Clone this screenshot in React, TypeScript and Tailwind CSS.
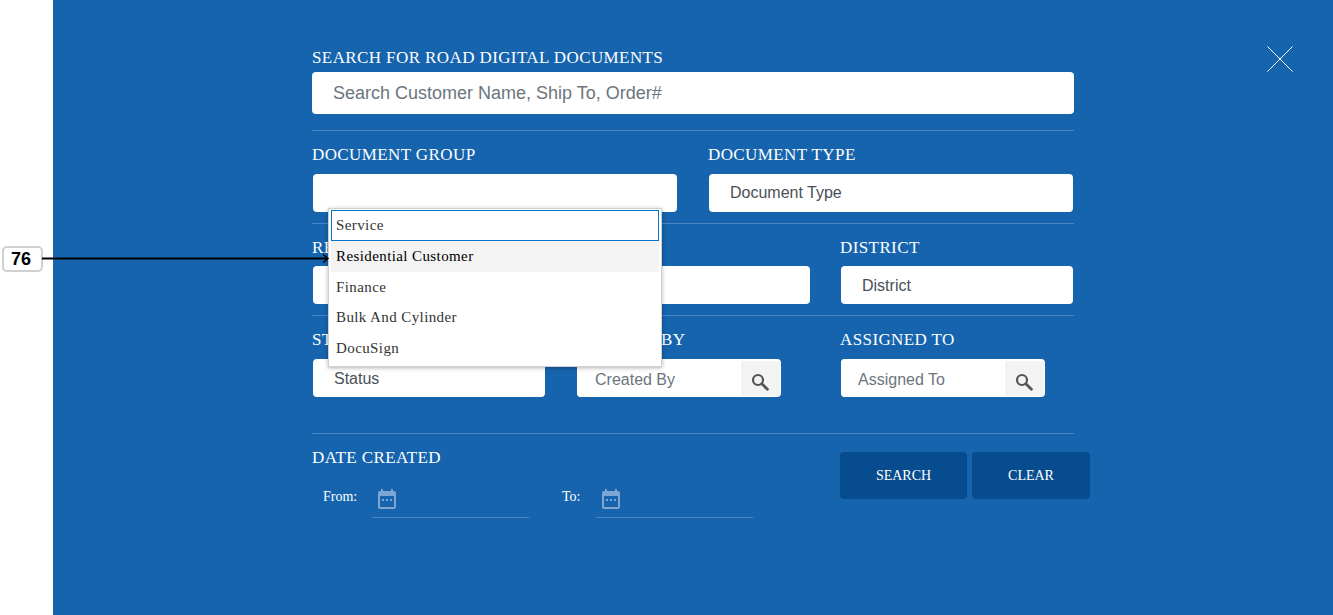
import React from 'react';

const SERIF = "font-['Liberation_Serif',serif]";

const Label: React.FC<{ children: React.ReactNode; className?: string }> = ({ children, className = '' }) => (
  <div className={`font-['Liberation_Serif',serif] text-[17px] leading-[22px] tracking-[0.4px] text-white ${className}`}>{children}</div>
);

const Field: React.FC<{ placeholder: string; className?: string }> = ({ placeholder, className = '' }) => (
  <input
    readOnly
    placeholder={placeholder}
    className={`ml-px block h-[38px] rounded-[4px] bg-white pl-[21px] font-['Liberation_Sans',sans-serif] text-[16px] placeholder:text-[#495057] outline-none ${className}`}
  />
);

const LookupField: React.FC<{ placeholder: string; className?: string }> = ({ placeholder, className = '' }) => (
  <div className="flex h-[38px] w-[204px] overflow-hidden rounded-[4px] bg-white">
    <input
      readOnly
      placeholder={placeholder}
      className={`min-w-0 flex-1 bg-white pt-[3px] font-['Liberation_Sans',sans-serif] text-[16px] placeholder:text-[#6c757d] outline-none ${className}`}
    />
    <div className="mt-[2px] mr-px flex h-[35px] w-[39px] items-end justify-center bg-[#f3f3f3] pb-[5px] pr-[2px]">
      <svg width="18" height="18" viewBox="0 0 18 18" fill="none" stroke="#555" strokeWidth="2.2">
        <circle cx="7" cy="7" r="5" />
        <path d="M10.8 10.8 L16.4 16.2" strokeWidth="2.8" strokeLinecap="round" />
      </svg>
    </div>
  </div>
);

const CalendarIcon = () => (
  <svg width="18" height="20" viewBox="0 0 18 20" className="ml-[6px] shrink-0">
    <path
      fill="#7ea6d3"
      d="M3 0h2v2h8V0h2v2h1a2 2 0 0 1 2 2v14a2 2 0 0 1-2 2H2a2 2 0 0 1-2-2V4a2 2 0 0 1 2-2h1z"
    />
    <rect x="2" y="7" width="14" height="11" rx="0.5" fill="#1664ae" />
    <rect x="4" y="10" width="2" height="2" fill="#7ea6d3" />
    <rect x="8" y="10" width="2" height="2" fill="#7ea6d3" />
    <rect x="12" y="10" width="2" height="2" fill="#7ea6d3" />
  </svg>
);

const DateField: React.FC<{ label: string; labelWidth: string }> = ({ label, labelWidth }) => (
  <div className="flex items-start">
    <div className={`${labelWidth} pt-[2px] pl-[11px] font-['Liberation_Serif',serif] text-[14px] leading-[18px] text-white`}>{label}</div>
    <div className="h-[32px] w-[157px] border-b border-[#4b86c2] pt-[3px]">
      <CalendarIcon />
    </div>
  </div>
);

const Divider: React.FC<{ className?: string }> = ({ className = '' }) => (
  <div className={`h-px w-full bg-[#4b86c2] ${className}`} />
);

const groups = ['Residential Customer', 'Finance', 'Bulk And Cylinder', 'DocuSign'];

export default function App() {
  return (
    <div className="relative flex h-screen w-screen overflow-hidden bg-white">
      <div className="w-[53px] shrink-0 bg-white" />

      <main className="relative flex-1 bg-[#1664ae] pl-[259px] pt-[47px]">
        {/* close */}
        <svg width="28" height="28" viewBox="0 0 28 28" stroke="white" strokeWidth="1" className="absolute left-[1213px] top-[45px]">
          <path d="M1.5 1.5 L26.5 26.5 M26.5 1.5 L1.5 26.5" />
        </svg>

        <div className="w-[762px]">
          <Label>SEARCH FOR ROAD DIGITAL DOCUMENTS</Label>
          <input
            readOnly
            placeholder="Search Customer Name, Ship To, Order#"
            className="mt-[3px] block h-[42px] w-full rounded-[4px] bg-white pl-[21px] font-['Liberation_Sans',sans-serif] text-[18px] placeholder:text-[#6c757d] outline-none"
          />
          <Divider className="mt-[16px]" />

          <div className="mt-[13px] flex">
            <div className="w-[396px]">
              <Label>DOCUMENT GROUP</Label>
              <div className="ml-px mt-[8px] h-[38px] w-[364px] rounded-[4px] bg-white" />
            </div>
            <div>
              <Label>DOCUMENT TYPE</Label>
              <Field placeholder="Document Type" className="mt-[8px] w-[364px]" />
            </div>
          </div>
          <Divider className="mt-[11px]" />

          <div className="mt-[13px] flex">
            <div className="w-[265px]">
              <Label>REGION</Label>
              <Field placeholder="Region" className="mt-[7px] w-[232px]" />
            </div>
            <div className="w-[263px]">
              <Label>AREA</Label>
              <Field placeholder="Area" className="mt-[7px] w-[232px]" />
            </div>
            <div>
              <Label>DISTRICT</Label>
              <Field placeholder="District" className="mt-[7px] w-[232px] pt-px" />
            </div>
          </div>
          <Divider className="mt-[11px]" />

          <div className="mt-[13px] flex">
            <div className="w-[265px]">
              <Label>STATUS</Label>
              <Field placeholder="Status" className="mt-[8px] w-[232px] pt-[2px]" />
            </div>
            <div className="w-[263px]">
              <Label>CREATED BY</Label>
              <div className="mt-[8px]"><LookupField placeholder="Created By" className="pl-[18px]" /></div>
            </div>
            <div>
              <Label>ASSIGNED TO</Label>
              <div className="ml-px mt-[8px]"><LookupField placeholder="Assigned To" className="pl-[17px]" /></div>
            </div>
          </div>
          <Divider className="mt-[36px]" />

          <div className="flex">
            <div className="w-[528px] shrink-0 pt-[13px]">
              <Label>DATE CREATED</Label>
              <div className="mt-[17px] flex gap-[22px]">
                <DateField label="From:" labelWidth="w-[60px]" />
                <DateField label="To:" labelWidth="w-[45px]" />
              </div>
            </div>
            <div className={`mt-[18px] flex shrink-0 gap-[5px] ${SERIF} text-[14px] text-white`}>
              <button className="h-[47px] w-[127px] rounded-[4px] bg-[#074c8e]">SEARCH</button>
              <button className="h-[47px] w-[118px] rounded-[4px] bg-[#074c8e]">CLEAR</button>
            </div>
          </div>
        </div>
      </main>

      {/* open document group list */}
      <div className={`absolute left-[328px] top-[208px] h-[159px] w-[334px] border border-[#d0d0d0] bg-white px-[2px] pt-px shadow-[0_1px_4px_rgba(0,0,0,0.3)] ${SERIF} text-[15px] tracking-[0.4px] text-[#333]`}>
        <div className="flex h-[31px] items-center border border-[#0078c8] pl-[4px]">Service</div>
        {groups.map((g, i) => (
          <div
            key={g}
            className={`flex h-[30.5px] items-center pl-[5px] ${i === 0 ? 'bg-[#f3f3f3] text-black' : ''}`}
          >
            {g}
          </div>
        ))}
      </div>

      {/* callout */}
      <div className="absolute left-[2px] top-[246px] flex h-[26px] w-[41px] items-center justify-center rounded-[5px] border-2 border-[#d0d0d0] bg-white pr-[3px] font-['Liberation_Sans',sans-serif] text-[18px] font-bold text-black">
        76
      </div>
      <svg width="288" height="12" viewBox="0 0 288 12" fill="none" stroke="black" className="absolute left-[42px] top-[252px]">
        <path d="M0 6.5 H285" strokeWidth="2" />
        <path d="M281 2.5 L286 6.5 L281 10.5" strokeWidth="1.5" />
      </svg>
    </div>
  );
}
